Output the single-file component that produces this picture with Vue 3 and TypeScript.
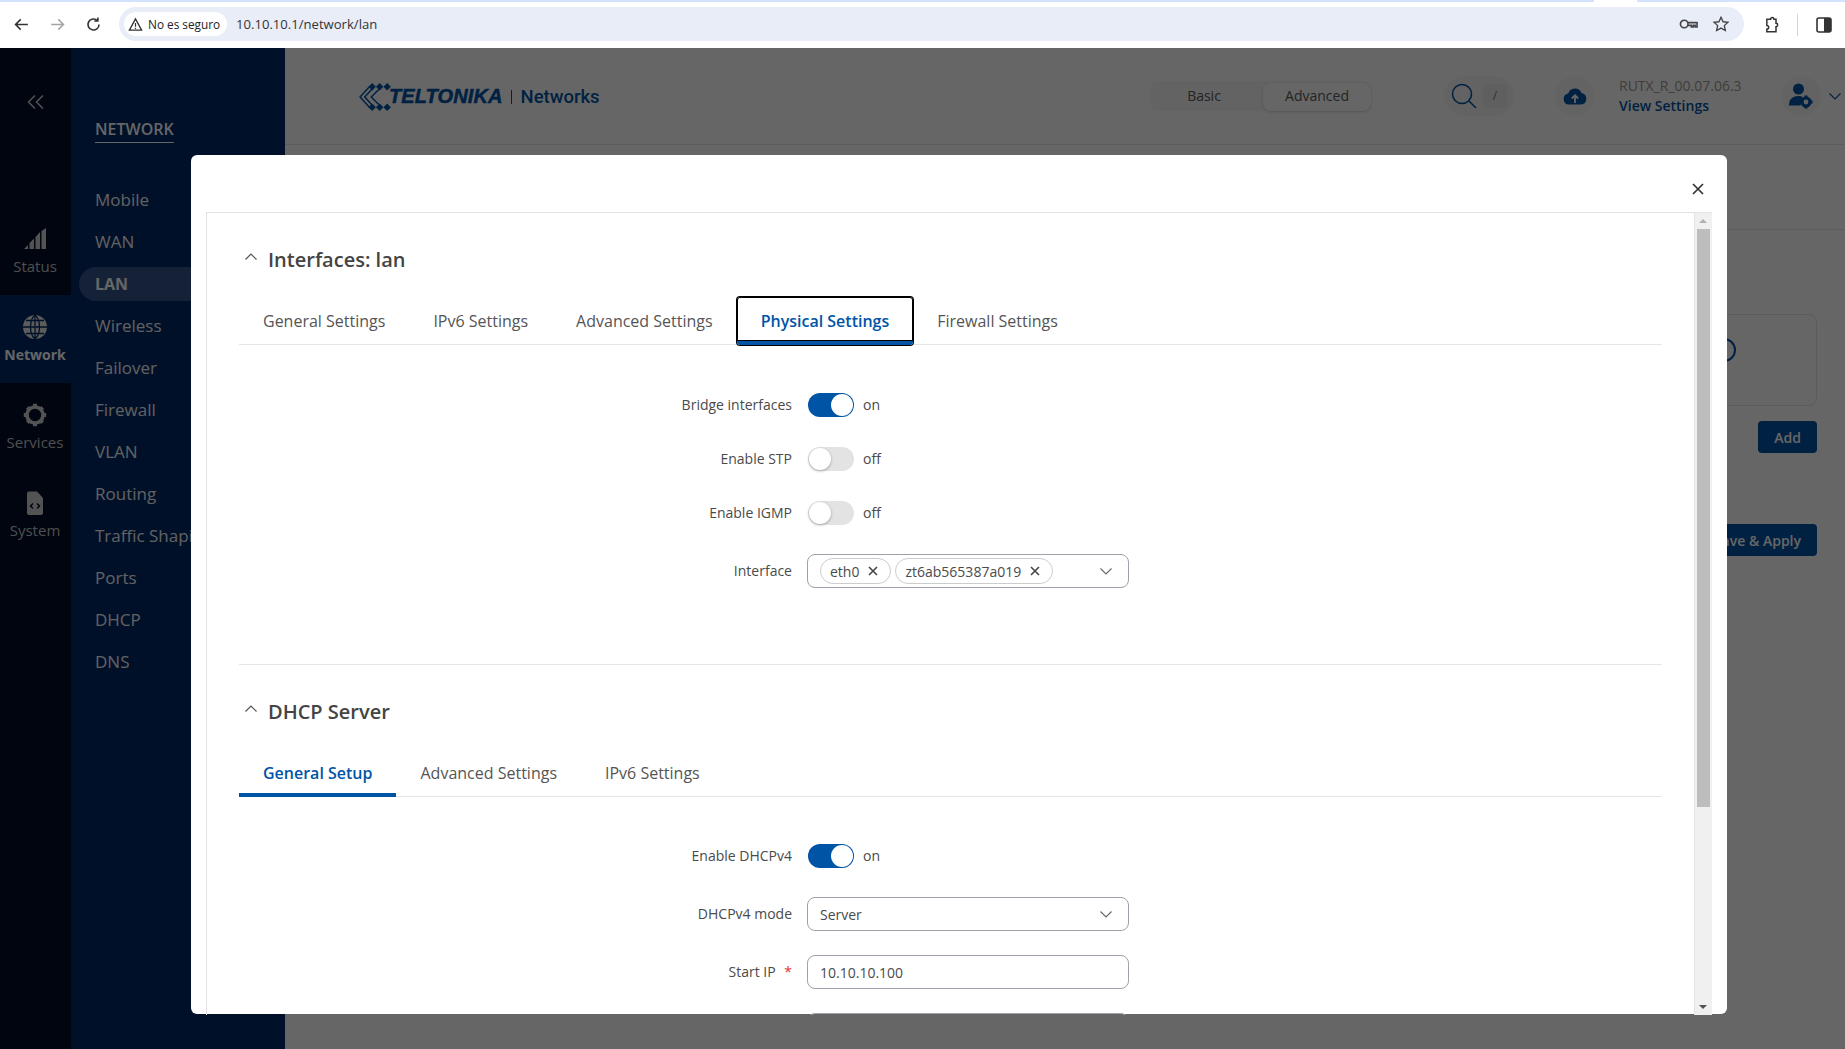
<template>
  <div class="screen">
    <!-- browser chrome -->
    <div class="chrome">
      <div class="tabstrip"></div>
      <div class="toolbar">
        <svg class="tb-icon back" viewBox="0 0 24 24"><path d="M20 12H5M11 5.500 4.500 12l6.500 6.500" /></svg>
        <svg class="tb-icon fwd" viewBox="0 0 24 24"><path d="M4 12h15M13 5.500l6.500 6.500-6.500 6.500" /></svg>
        <svg class="tb-icon reload" viewBox="0 0 24 24"><path d="M19 12a7 7 0 1 1-2.100-5M17.500 3v4.500H13" /></svg>
        <div class="omnibox">
          <div class="secure">
            <svg viewBox="0 0 16 16" width="15" height="15"><path d="M8 2 1.500 14h13L8 2Z" fill="none" stroke="#333" stroke-width="1.400" /><path d="M8 6.500v4M8 11.500v1.200" stroke="#333" stroke-width="1.300" /></svg>
            <span>No es seguro</span>
          </div>
          <span class="url">10.10.10.1/network/lan</span>
          <svg class="omni-icon key" viewBox="0 0 20 12"><circle cx="5.500" cy="6" r="4" /><path d="M9.500 4.500H19V9h-2V7.500h-2V9h-2V7.500H9.500" /></svg>
          <svg class="omni-icon star" viewBox="0 0 20 20"><path d="m10 2.500 2.300 5 5.400.6-4 3.700 1.100 5.400-4.800-2.700-4.800 2.700 1.100-5.400-4-3.700 5.400-.6Z" /></svg>
        </div>
        <svg class="tb-icon ext" viewBox="0 0 24 24"><path d="M9 5h2.500a2 2 0 0 1 4 0H18v5a2 2 0 0 1 0 4v6H7v-3a2.200 2.200 0 0 0 0-4.500V5Z" /></svg>
        <span class="tb-divider"></span>
        <svg class="side-panel" viewBox="0 0 16 16"><rect x="1" y="1" width="14" height="14" rx="2" fill="#fff" stroke="#333" stroke-width="1.600" /><rect x="8" y="1" width="7" height="14" fill="#333" /></svg>
      </div>
    </div>

    <div class="page">
      <!-- left rail -->
      <aside class="rail">
        <div class="collapse">
          <svg viewBox="0 0 17 14" width="17" height="14"><path d="M8 .5 1.500 7 8 13.500M16 .5 9.500 7l6.500 6.500" fill="none" stroke="#d0d0d0" stroke-width="1.500" /></svg>
        </div>
        <div class="rail-item">
          <svg class="rail-icon" viewBox="0 0 24 24"><path d="M1 22 5 18v4H1ZM6.500 16l4.500-4.500V22H6.500V16ZM12.500 10 17 5v17h-4.500V10ZM18.500 4 23 1v21h-4.500V4Z" fill="#d0d0d0" /></svg>
          <span>Status</span>
        </div>
        <div class="rail-item active">
          <svg class="rail-icon" viewBox="0 0 24 24">
            <circle cx="12" cy="12" r="12" fill="#e6e6e6" />
            <path d="M0 12h24M3 5.500h18M3 18.500h18M12 0v24M12 0C6 5 6 19 12 24M12 0c6 5 6 19 0 24" fill="none" stroke="#002868" stroke-width="1.300" />
          </svg>
          <span>Network</span>
        </div>
        <div class="rail-item">
          <svg class="rail-icon" viewBox="0 0 24 24">
            <circle cx="12" cy="12" r="8" fill="none" stroke="#d0d0d0" stroke-width="3.600" />
            <path d="M10 .8h4v3.500h-4ZM10 19.700h4v3.500h-4ZM.8 10h3.500v4H.8ZM19.700 10h3.500v4h-3.500ZM3 5.800 5.800 3l2.400 2.400-2.800 2.800ZM18.200 21l2.800-2.800-2.400-2.400-2.800 2.800ZM3 18.200 5.800 21l2.400-2.400-2.800-2.800ZM21 5.800 18.200 3l-2.400 2.400 2.800 2.800Z" fill="#d0d0d0" />
          </svg>
          <span>Services</span>
        </div>
        <div class="rail-item">
          <svg class="rail-icon" viewBox="0 0 24 24">
            <path d="M6 .5h8l6 6.500v15a2 2 0 0 1-2 2H6a2 2 0 0 1-2-2v-19.500a2 2 0 0 1 2-2Z" fill="#d0d0d0" />
            <path d="M10 12.500l-2.500 2.500 2.500 2.500M14 12.500l2.500 2.500-2.500 2.500" fill="none" stroke="#000d28" stroke-width="1.500" />
          </svg>
          <span>System</span>
        </div>
      </aside>

      <!-- section menu -->
      <nav class="subnav">
        <div class="subnav-title"><span>NETWORK</span></div>
        <ul class="subnav-list">
          <li v-for="item in menu" :key="item" :class="{ current: item === 'LAN' }">{{ item }}</li>
        </ul>
      </nav>

      <!-- page behind the dialog -->
      <main class="main">
        <header class="topbar">
          <div class="logo">
            <svg class="logo-mark" viewBox="0 0 36 30">
              <path d="M12 4 2 15l10 11M17 4 7 15l10 11M22 7 14 15l8 8" fill="none" stroke="#0054a6" stroke-width="1.600" />
              <path d="M15 0l4 4-4 4-4-4ZM23 0l4 4-4 4-4-4ZM31 0l4 4-4 4-4-4ZM15 22l4 4-4 4-4-4ZM23 22l4 4-4 4-4-4ZM31 22l4 4-4 4-4-4Z" fill="#0054a6" />
            </svg>
            <span class="logo-word">TELTONIKA</span>
            <span class="logo-sep"></span>
            <span class="logo-sub">Networks</span>
          </div>
          <div class="mode">
            <span class="mode-btn">Basic</span>
            <span class="mode-btn on">Advanced</span>
          </div>
          <div class="search">
            <svg viewBox="0 0 26 26" width="26" height="26"><circle cx="11" cy="11" r="9.500" fill="none" stroke="#0054a6" stroke-width="1.600" /><path d="m18 18 7 7" stroke="#0054a6" stroke-width="1.600" /></svg>
            <span class="slash">/</span>
          </div>
          <div class="round upload">
            <svg viewBox="0 0 24 18" width="24" height="18"><path d="M6 17.500a5.500 5.500 0 0 1-.8-10.900A7 7 0 0 1 18.500 6a5.800 5.800 0 0 1-.5 11.500Z" fill="#0054a6" /><path d="M12 16V9M8.800 11.500 12 8.300l3.200 3.200" fill="none" stroke="#fff" stroke-width="1.800" /></svg>
          </div>
          <div class="version">
            <span>RUTX_R_00.07.06.3</span>
            <a>View Settings</a>
          </div>
          <div class="round user">
            <svg viewBox="0 0 24 26" width="24" height="26">
              <circle cx="9.500" cy="6" r="5.500" fill="#0054a6" />
              <path d="M0 22c0-6 4-9 9.500-9 2 0 3 .3 4 1l-2 8.500H0Z" fill="#0054a6" />
              <circle cx="17" cy="19" r="4" fill="none" stroke="#0054a6" stroke-width="3.200" />
              <path d="M15.500 12.500h3v2.500h-3ZM15.500 23h3v2.500h-3ZM10.500 17.500h2.500v3h-2.500ZM21 17.500h2.500v3H21Z" fill="#0054a6" />
            </svg>
          </div>
          <svg class="user-caret" viewBox="0 0 12 7" width="12" height="7"><path d="m.5 .5 5.500 5.500 5.500-5.500" fill="none" stroke="#0054a6" stroke-width="1.100" /></svg>
        </header>
        <div class="page-title"></div>
        <div class="page-card"><span class="ring"></span></div>
        <button class="page-btn add">Add</button>
        <button class="page-btn save">Save &amp; Apply</button>
      </main>

      <!-- dialog -->
      <div class="backdrop">
        <div class="modal">
          <svg class="close" viewBox="0 0 12 12"><path d="m1 1 10 10M11 1 1 11" /></svg>
          <div class="modal-body">
            <div class="content">
              <section class="section">
                <h2 class="section-title">
                  <svg class="caret-up" viewBox="0 0 12 7"><path d="m.5 6.500 5.500-5.500 5.500 5.500" /></svg>
                  Interfaces: lan
                </h2>
                <div class="tabs">
                  <span v-for="tab in ifaceTabs" :key="tab" class="tab" :class="{ active: tab === 'Physical Settings', focused: tab === 'Physical Settings' }">{{ tab }}</span>
                </div>
                <div class="form">
                  <div v-for="row in bridgeRows" :key="row.label" class="row">
                    <label class="label">{{ row.label }}</label>
                    <span class="switch" :class="{ on: row.on }"><i></i></span>
                    <span class="switch-text">{{ row.on ? 'on' : 'off' }}</span>
                  </div>
                  <div class="row row-select">
                    <label class="label">Interface</label>
                    <div class="field">
                      <span v-for="chip in chips" :key="chip" class="chip">
                        {{ chip }}
                        <svg viewBox="0 0 10 10" width="10" height="10"><path d="m1 1 8 8M9 1 1 9" fill="none" stroke="#444" stroke-width="1.600" /></svg>
                      </span>
                      <svg class="caret" viewBox="0 0 12 7"><path d="m.5 .5 5.500 5.500 5.500-5.500" /></svg>
                    </div>
                  </div>
                </div>
              </section>

              <section class="section second">
                <h2 class="section-title">
                  <svg class="caret-up" viewBox="0 0 12 7"><path d="m.5 6.500 5.500-5.500 5.500 5.500" /></svg>
                  DHCP Server
                </h2>
                <div class="tabs">
                  <span v-for="tab in dhcpTabs" :key="tab" class="tab" :class="{ active: tab === 'General Setup' }">{{ tab }}</span>
                </div>
                <div class="form dhcp">
                  <div class="row">
                    <label class="label">Enable DHCPv4</label>
                    <span class="switch on"><i></i></span>
                    <span class="switch-text">on</span>
                  </div>
                  <div class="row">
                    <label class="label">DHCPv4 mode</label>
                    <div class="field text">
                      Server
                      <svg class="caret" viewBox="0 0 12 7"><path d="m.5 .5 5.500 5.500 5.500-5.500" /></svg>
                    </div>
                  </div>
                  <div class="row tight">
                    <label class="label">Start IP <b>*</b></label>
                    <div class="field text">10.10.10.100</div>
                  </div>
                  <div class="row tight">
                    <label class="label"></label>
                    <div class="field text"></div>
                  </div>
                </div>
              </section>
            </div>

            <div class="scrollbar">
              <span class="arrow up"></span>
              <span class="thumb"></span>
              <span class="arrow down"></span>
            </div>
          </div>
        </div>
      </div>
    </div>
  </div>
</template>

<script setup lang="ts">
type SwitchRow = {
  label: string
  on: boolean
}

const menu: string[] = [
  'Mobile',
  'WAN',
  'LAN',
  'Wireless',
  'Failover',
  'Firewall',
  'VLAN',
  'Routing',
  'Traffic Shaping',
  'Ports',
  'DHCP',
  'DNS',
]

const ifaceTabs: string[] = [
  'General Settings',
  'IPv6 Settings',
  'Advanced Settings',
  'Physical Settings',
  'Firewall Settings',
]

const dhcpTabs: string[] = ['General Setup', 'Advanced Settings', 'IPv6 Settings']

const bridgeRows: SwitchRow[] = [
  { label: 'Bridge interfaces', on: true },
  { label: 'Enable STP', on: false },
  { label: 'Enable IGMP', on: false },
]

const chips: string[] = ['eth0', 'zt6ab565387a019']
</script>

<style>
html,
body {
  margin: 0;
  overflow: hidden;
}
</style>

<style scoped>
.screen {
  width: 1845px;
  height: 1049px;
  display: flex;
  flex-direction: column;
  overflow: hidden;
  font-family: 'Open Sans', 'Noto Sans', sans-serif;
}

/* browser */
.chrome {
  height: 48px;
  flex: none;
  background: #fff;
}

.tabstrip {
  height: 2px;
  background: linear-gradient(90deg, #d3e3fd 1594px, #fff 1594px, #fff 1637px, #d3e3fd 1637px);
}

.toolbar {
  height: 46px;
  display: flex;
  align-items: flex-start;
  padding-top: 5px;
  box-sizing: border-box;
}

.tb-icon {
  width: 19px;
  height: 19px;
  margin-top: 8px;
  fill: none;
  stroke: #333;
  stroke-width: 2;
}

.back {
  margin-left: 12px;
}

.fwd {
  margin-left: 17px;
  stroke: #a5a5a5;
}

.reload {
  margin-left: 17px;
}

.omnibox {
  width: 1625px;
  height: 34px;
  margin-left: 16px;
  border-radius: 17px;
  background: #e9edf8;
  display: flex;
  align-items: center;
  padding-left: 5px;
  box-sizing: border-box;
}

.secure {
  width: 103px;
  height: 24px;
  border-radius: 12px;
  background: #fff;
  display: flex;
  align-items: center;
  gap: 5px;
  padding-left: 4px;
  box-sizing: border-box;
  font-size: 11.800px;
  color: #222;
  white-space: nowrap;
}

.url {
  margin-left: 9px;
  font-size: 13.100px;
  color: #333;
}

.omni-icon {
  fill: none;
  stroke: #444;
  stroke-width: 1.500;
}

.key {
  width: 19px;
  height: 12px;
  margin-left: auto;
  stroke-width: 1.700;
}

.star {
  width: 18px;
  height: 18px;
  margin-left: 14px;
  margin-right: 14px;
}

.ext {
  margin-left: 17px;
  stroke-width: 1.800;
  width: 20px;
  height: 20px;
}

.tb-divider {
  width: 1px;
  height: 22px;
  margin: 7px 0 0 16px;
  background: #c7d7f0;
}

.side-panel {
  width: 16px;
  height: 16px;
  margin: 10px 0 0 18px;
}

/* page */
.page {
  position: relative;
  flex: 1;
  display: flex;
  min-height: 0;
}

.rail {
  width: 71px;
  flex: none;
  background: #000d28;
  color: #c4c4c4;
}

.collapse {
  height: 159px;
  box-sizing: border-box;
  padding-top: 47px;
  display: flex;
  justify-content: center;
  align-items: flex-start;
}

.rail-item {
  height: 88px;
  box-sizing: border-box;
  padding: 20px 1px 0 0;
  display: flex;
  flex-direction: column;
  align-items: center;
  font-size: 15px;
  line-height: 20px;
}

.rail-icon {
  width: 24px;
  height: 24px;
  margin-bottom: 5px;
}

.rail-item.active {
  background: #002868;
  color: #fff;
  font-size: 14px;
  font-weight: 700;
}

.rail-item.active .rail-icon {
  margin-bottom: 6px;
}

.subnav {
  width: 214px;
  flex: none;
  background: #002868;
  overflow: hidden;
}

.subnav-title {
  height: 131px;
  box-sizing: border-box;
  padding: 70px 0 0 24px;
  color: #fff;
  font-size: 16px;
  font-weight: 600;
  line-height: 22px;
}

.subnav-title span {
  display: inline-block;
  padding-bottom: 2px;
  border-bottom: 1px solid #fff;
}

.subnav-list {
  list-style: none;
  margin: 0;
  padding: 0 0 0 8px;
}

.subnav-list li {
  height: 42px;
  line-height: 42px;
  padding-left: 16px;
  font-size: 17px;
  color: #f2f2f2;
  white-space: nowrap;
}

.subnav-list li.current {
  height: 34px;
  line-height: 34px;
  margin: 4px 0;
  border-radius: 17px 0 0 17px;
  background: #33538a;
  font-size: 16px;
  font-weight: 700;
  color: #fff;
}

.main {
  flex: 1;
  min-width: 0;
  background: #fff;
  display: flex;
  flex-direction: column;
}

.topbar {
  height: 97px;
  flex: none;
  box-sizing: border-box;
  border-bottom: 1px solid #e8e8e8;
  display: flex;
  align-items: center;
}

.logo {
  display: flex;
  align-items: center;
  flex: none;
  margin-left: 73px;
  margin-top: 1px;
  width: 240px;
  white-space: nowrap;
  color: #0054a6;
}

.logo-mark {
  width: 34px;
  height: 28px;
  flex: none;
}

.logo-word {
  margin-left: -3px;
  font-family: 'Liberation Sans', sans-serif;
  font-size: 20px;
  font-style: italic;
  font-weight: 700;
  letter-spacing: 0.1px;
  -webkit-text-stroke: 0.5px #0054a6;
}

.logo-sep {
  flex: none;
  width: 1px;
  height: 14px;
  margin: 0 9px 0 8px;
  background: #0054a6;
}

.logo-sub {
  font-family: 'Roboto', sans-serif;
  font-size: 18.500px;
  font-weight: 500;
}

.mode {
  flex: none;
  width: 221px;
  height: 30px;
  margin-left: 552px;
  border-radius: 8px;
  background: #f7f7f7;
  display: flex;
  justify-content: space-between;
  font-size: 14px;
  color: #5a5a5a;
}

.mode-btn {
  width: 108px;
  padding-bottom: 2px;
  box-sizing: border-box;
  display: flex;
  align-items: center;
  justify-content: center;
}

.mode-btn.on {
  height: 28px;
  margin-top: 2px;
  padding-bottom: 4px;
  background: #fff;
  border-radius: 8px;
  box-shadow: 0 1px 3px rgba(0, 0, 0, 0.18);
}

.search {
  flex: none;
  width: 70px;
  height: 40px;
  margin-left: 73px;
  box-sizing: border-box;
  padding: 0 7px;
  border-radius: 20px;
  background: #f7f7f7;
  display: flex;
  align-items: center;
  justify-content: space-between;
}

.slash {
  width: 24px;
  height: 24px;
  background: #eee;
  border-radius: 3px;
  text-align: center;
  font-size: 12px;
  line-height: 24px;
  color: #777;
}

.round {
  flex: none;
  width: 40px;
  height: 40px;
  border-radius: 50%;
  background: #f7f7f7;
  display: flex;
  align-items: center;
  justify-content: center;
}

.upload {
  margin-left: 41px;
}

.version {
  flex: none;
  width: 162px;
  margin-left: 24px;
  display: flex;
  flex-direction: column;
  font-size: 14px;
  line-height: 20px;
  color: #a09a96;
}

.version a {
  font-weight: 600;
  color: #0054a6;
}

.user-caret {
  flex: none;
  margin-left: 8px;
}

.page-title {
  height: 84px;
  flex: none;
  border-bottom: 1px solid #e8e8e8;
}

.page-card {
  height: 92px;
  flex: none;
  margin: 84px 28px 0 0;
  border: 1px solid #e3e3e3;
  border-radius: 8px;
  display: flex;
  align-items: flex-start;
  justify-content: flex-end;
  padding: 23px 80px 0 0;
  box-sizing: border-box;
}

.ring {
  width: 20px;
  height: 20px;
  border: 2px solid #0054a6;
  border-radius: 50%;
}

.page-btn {
  align-self: flex-end;
  height: 32px;
  margin-right: 28px;
  border: 0;
  border-radius: 4px;
  background: #0054a6;
  color: #fff;
  font-family: inherit;
  font-size: 14px;
  font-weight: 600;
  padding: 0 16px;
}

.page-btn.add {
  margin-top: 15px;
  width: 59px;
  padding: 0;
}

.page-btn.save {
  margin-top: 71px;
}

/* dialog */
.backdrop {
  position: absolute;
  inset: 0;
  background: rgba(0, 0, 0, 0.6);
  padding: 107px 0 0 191px;
  box-sizing: border-box;
}

.modal {
  position: relative;
  width: 1536px;
  height: 859px;
  box-sizing: border-box;
  padding: 57px 15px 0 15px;
  background: #fff;
  border-radius: 6px;
}

.close {
  position: absolute;
  top: 28px;
  right: 23px;
  width: 12px;
  height: 12px;
  fill: none;
  stroke: #333;
  stroke-width: 1.700;
}

.modal-body {
  height: 802px;
  display: flex;
  border: solid #e3e3e3;
  border-width: 1px 0 0 1px;
  overflow: hidden;
}

.content {
  width: 1487px;
  flex: none;
  box-sizing: border-box;
  padding: 0 32px;
  color: #4a4a4a;
}

.section {
  padding-top: 33px;
}

.section.second {
  margin-top: 76px;
  border-top: 1px solid #e6e6ea;
}

.section-title {
  position: relative;
  margin: 0;
  height: 28px;
  padding-left: 29px;
  font-size: 20px;
  font-weight: 600;
  line-height: 28px;
  color: #444;
}

.caret-up {
  position: absolute;
  left: 6px;
  top: 7px;
  width: 12px;
  height: 7px;
  fill: none;
  stroke: #555;
  stroke-width: 1.200;
}

.tabs {
  display: flex;
  margin-top: 23px;
  height: 48px;
  box-sizing: border-box;
  border-bottom: 1px solid #e6e6ea;
}

.tab {
  height: 48px;
  box-sizing: border-box;
  padding: 0 24px;
  line-height: 48px;
  font-size: 16px;
  color: #555;
  white-space: nowrap;
}

.tab.active {
  color: #0054a6;
  font-weight: 600;
  border-bottom: 4px solid #0054a6;
}

.tab.focused {
  border-radius: 3px;
  box-shadow: 0 0 0 1px #000, inset 0 0 0 1px #000;
}

.form {
  margin-top: 48px;
  display: flex;
  flex-direction: column;
  gap: 30px;
}

.form.dhcp {
  margin-top: 47px;
  gap: 29px;
}

.row {
  display: flex;
  align-items: center;
  min-height: 24px;
}

.row-select {
  margin-top: -1px;
}

.row.tight {
  margin-top: -5px;
}

.label {
  width: 553px;
  margin: 0 15px 2px 0;
  flex: none;
  text-align: right;
  font-size: 14px;
  color: #4a4a4a;
}

.label b {
  margin-left: 5px;
  color: #e0323c;
  font-weight: 400;
}

.switch {
  position: relative;
  width: 46px;
  height: 24px;
  margin-left: 1px;
  border-radius: 12px;
  background: #e3e3e3;
}

.switch i {
  position: absolute;
  left: 1px;
  top: 1px;
  width: 22px;
  height: 22px;
  border-radius: 50%;
  background: #fff;
  box-shadow: 0 1px 3px rgba(0, 0, 0, 0.3);
}

.switch.on {
  background: #0054a6;
}

.switch.on i {
  left: 23px;
  box-shadow: none;
}

.switch-text {
  margin: 0 0 2px 9px;
  font-size: 14px;
}

.field {
  position: relative;
  width: 322px;
  height: 34px;
  box-sizing: border-box;
  padding-left: 12px;
  border: 1px solid #a0a0aa;
  border-radius: 8px;
  display: flex;
  align-items: center;
  gap: 4px;
  font-size: 14px;
  color: #4a4a4a;
}

.chip {
  height: 26px;
  box-sizing: border-box;
  padding: 0 12px 0 9px;
  border: 1px solid #ccc;
  border-radius: 13px;
  display: flex;
  align-items: center;
  gap: 9px;
  white-space: nowrap;
}

.caret {
  position: absolute;
  right: 16px;
  top: 13px;
  width: 12px;
  height: 7px;
  fill: none;
  stroke: #666;
  stroke-width: 1.100;
}

.scrollbar {
  width: 18px;
  flex: none;
  position: relative;
  background: #f0f0f0;
  border-left: 1px solid #e3e3e3;
}

.thumb {
  position: absolute;
  left: 2px;
  top: 16px;
  width: 13px;
  height: 578px;
  background: #bdbdbd;
}

.arrow {
  position: absolute;
  left: 4px;
  width: 0;
  height: 0;
  border-left: 4px solid transparent;
  border-right: 4px solid transparent;
}

.arrow.up {
  top: 6px;
  border-bottom: 4px solid #b0b0b0;
}

.arrow.down {
  bottom: 6px;
  border-top: 4px solid #505050;
}
</style>
